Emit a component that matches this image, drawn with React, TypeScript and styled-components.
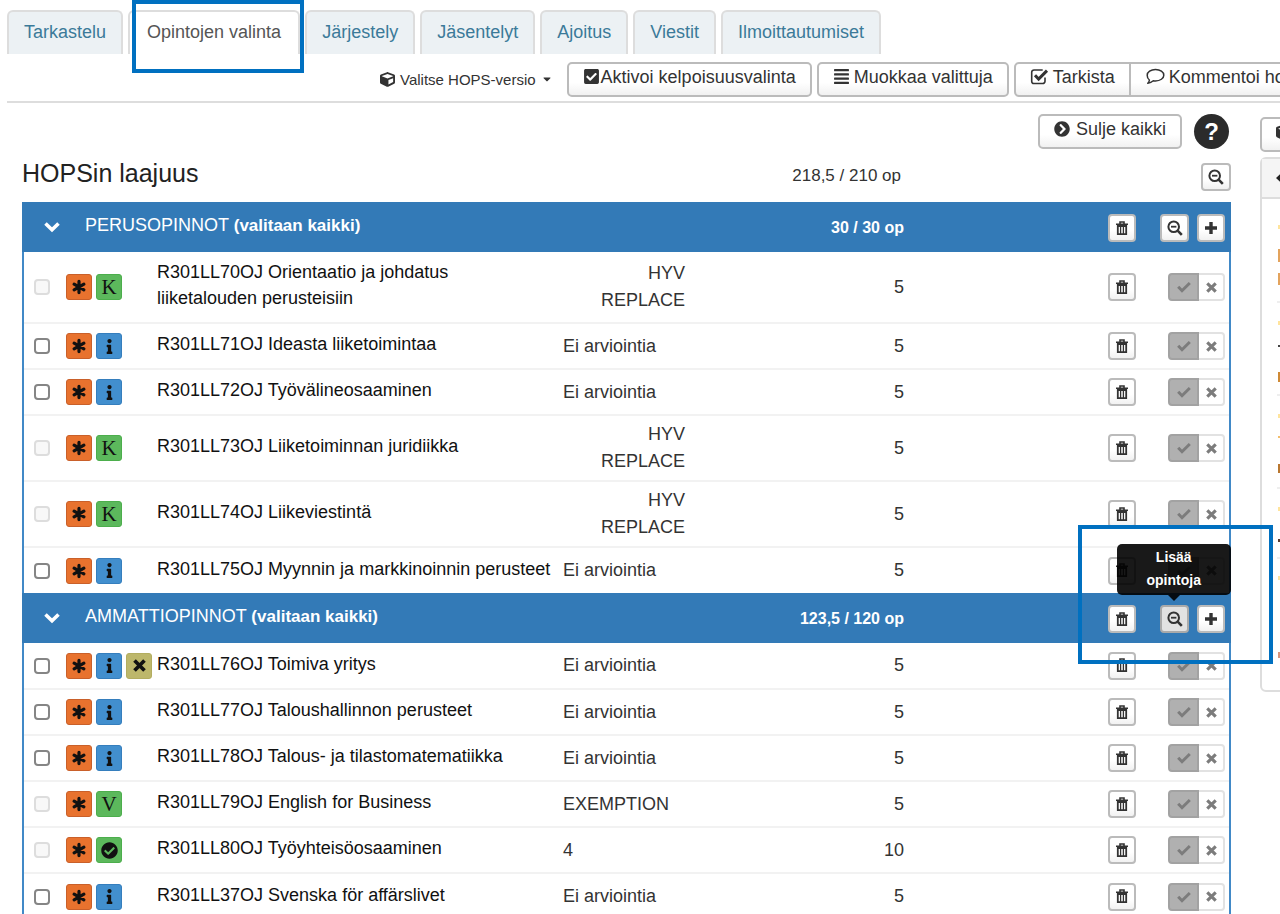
import React from "react";
import styled, { createGlobalStyle, css } from "styled-components";
import {
  FaAlignJustify,
  FaCaretDown,
  FaCheckCircle,
  FaCheckSquare,
  FaChevronCircleRight,
  FaCube,
  FaInfo,
} from "react-icons/fa";

const GlobalStyle = createGlobalStyle`
  * { box-sizing: border-box; }
  body {
    margin: 0;
    background: #fff;
    color: #333;
    font-family: "Liberation Sans", Arial, sans-serif;
    font-size: 18px;
  }
  button { font-family: inherit; cursor: pointer; }
`;

const BLUE = "#337ab7";
const MARKER = "#0070c0";

const Page = styled.div`
  height: 100vh;
  overflow: hidden;
  padding-top: 10px;
`;

const Tabs = styled.nav`
  display: flex;
  gap: 5px;
  padding-left: 7px;
`;

const Tab = styled.a<{ $active?: boolean }>`
  position: relative;
  height: 44px;
  padding: 0 ${(p) => (p.$active ? 17 : 15)}px;
  border: 2px solid #ddd;
  border-bottom: 0;
  border-radius: 6px 6px 0 0;
  background: ${(p) => (p.$active ? "#fff" : "#ecf1f4")};
  color: ${(p) => (p.$active ? "#555" : "#3b7a99")};
  line-height: 40px;
  white-space: nowrap;
  text-decoration: none;
`;

const TabMarker = styled.span`
  position: absolute;
  inset: -12px -6px -19px 2px;
  border: 4px solid ${MARKER};
  z-index: 2;
`;

const Toolbar = styled.div`
  display: flex;
  align-items: center;
  gap: 5px;
  height: 49px;
  margin-left: 7px;
  padding: 3px 0 0 373px;
  border-bottom: 2px solid #ddd;
  overflow: hidden;
`;

const VersionPicker = styled.button`
  display: flex;
  align-items: center;
  gap: 5px;
  margin-right: 9px;
  padding: 0;
  border: 0;
  background: none;
  color: #333;
  font-size: 15px;
  white-space: nowrap;
`;

const surface = css`
  border: 2px solid #bbb;
  background: linear-gradient(#fff 60%, #f1f1f1);
  color: #333;
`;

const ToolButton = styled.button<{ $gap?: number }>`
  ${surface}
  display: flex;
  flex: none;
  align-items: center;
  gap: ${(p) => p.$gap ?? 4}px;
  height: 35px;
  padding: 0 14px 5px;
  border-radius: 5px;
  font-size: 18px;
  line-height: 24px;
  white-space: nowrap;
`;

const ButtonGroup = styled.div`
  display: flex;
  flex: none;
  & > button:first-child { border-radius: 5px 0 0 5px; }
  & > button:last-child { border-radius: 0 5px 5px 0; margin-left: -2px; }
`;

const Columns = styled.div`
  display: grid;
  grid-template-columns: minmax(0, 1fr) 20px;
`;

const Main = styled.main`
  padding: 11px 29px 0 22px;
`;

const Controls = styled.div`
  display: flex;
  justify-content: flex-end;
  align-items: center;
  gap: 12px;
  padding-right: 2px;
`;

const Help = styled.button`
  width: 35px;
  height: 35px;
  padding: 0;
  border: 0;
  border-radius: 50%;
  background: #2b2b2b;
  color: #fff;
  font-size: 24px;
  font-weight: bold;
  line-height: 35px;
`;

const Summary = styled.div`
  display: grid;
  grid-template-columns: minmax(0, 1fr) auto 330px;
  align-items: center;
  height: 53px;
`;

const Heading = styled.h1`
  margin: 0;
  padding-bottom: 4px;
  color: #222;
  font-size: 25px;
  font-weight: normal;
`;

const Total = styled.span`
  font-size: 17px;
`;

const SummaryAction = styled.div`
  display: flex;
  justify-content: flex-end;
  padding-top: 3px;
`;

const IconButton = styled.button<{ $wide?: boolean; $pressed?: boolean }>`
  ${surface}
  position: relative;
  display: flex;
  align-items: center;
  justify-content: center;
  width: ${(p) => (p.$wide ? 30 : 28)}px;
  height: 28px;
  padding: 0;
  border-radius: 4px;
  ${(p) => p.$pressed && "background: #e2e2e2; border-color: #aaa;"}
`;

const PlanFrame = styled.div`
  border: solid #4189c7;
  border-width: 0 2px;
`;

const Plan = styled.table`
  width: 100%;
  border-collapse: collapse;
  table-layout: fixed;
  td, th { padding: 0; }
`;

const SectionRow = styled.tr`
  height: 50px;
  background: ${BLUE};
  box-shadow: -2px 0 ${BLUE}, 2px 0 ${BLUE};
  color: #fff;
  && > td { padding-top: 2px; }
`;

const SectionTitle = styled.div`
  display: flex;
  align-items: center;
  gap: 24px;
  padding: 0 0 4px 19px;
  font-size: 18px;
  font-weight: normal;
  text-align: left;
  svg { margin-top: 4px; }
`;

const Rule = styled.b`
  font-size: 17px;
`;

const CourseRow = styled.tr<{ $height: number }>`
  height: ${(p) => p.$height}px;
  & + & { border-top: 2px solid #f2f2f2; }
`;

const Flags = styled.div`
  display: flex;
  align-items: center;
  gap: 4px;
  padding-left: 10px;
`;

const Check = styled.input`
  appearance: none;
  width: 16px;
  height: 16px;
  margin: 0 12px 0 0;
  border: 2px solid #858585;
  border-radius: 4px;
  background: #fff;
  &:disabled { border-color: #ddd; background: #f8f8f8; }
`;

const badgeColors = {
  star: ["#e8722e", "#c9602a"],
  info: ["#428fce", "#357ebd"],
  good: ["#5cb85c", "#4cae4c"],
  cross: ["#bdb76b", "#b3ad60"],
};

const Badge = styled.span<{ $tone: keyof typeof badgeColors }>`
  display: flex;
  align-items: center;
  justify-content: center;
  width: 26px;
  height: 26px;
  border: 1px solid ${(p) => badgeColors[p.$tone][1]};
  border-radius: 3px;
  background: ${(p) => badgeColors[p.$tone][0]};
  color: #111;
  font-family: "Liberation Serif", serif;
  font-size: 21px;
  line-height: 26px;
`;

const Name = styled.div`
  padding-bottom: 4px;
  color: #111;
  line-height: 26px;
  white-space: pre-line;
`;

const Grade = styled.div<{ $stacked: boolean }>`
  width: 122px;
  text-align: ${(p) => (p.$stacked ? "right" : "left")};
  white-space: pre-line;
  line-height: 27px;
`;

const Credits = styled.div<{ $total?: boolean }>`
  text-align: right;
  font-size: ${(p) => (p.$total ? 16 : 18)}px;
  font-weight: ${(p) => (p.$total ? "bold" : "normal")};
`;

const Actions = styled.div`
  position: relative;
  display: grid;
  grid-template-columns: 28px 65px;
  gap: 24px;
  justify-content: end;
  padding-right: 4px;
`;

const ActionPair = styled.div<{ $gap: number }>`
  display: flex;
  justify-content: flex-end;
  gap: ${(p) => p.$gap}px;
`;

const Toggle = styled.button<{ $on?: boolean }>`
  display: flex;
  align-items: center;
  justify-content: center;
  width: ${(p) => (p.$on ? 31 : 26)}px;
  height: 28px;
  padding: 0;
  border: 2px solid ${(p) => (p.$on ? "#a2a2a2" : "#e2e2e2")};
  ${(p) => !p.$on && "border-left: 0;"}
  border-radius: ${(p) => (p.$on ? "4px 0 0 4px" : "0 4px 4px 0")};
  background: ${(p) => (p.$on ? "#b0b0b0" : "#fff")};
  color: #7c7c7c;
`;

const Tooltip = styled.span`
  position: absolute;
  bottom: 36px;
  left: 50%;
  width: 114px;
  margin-left: -58px;
  padding: 2px 24px 3px;
  border-radius: 5px;
  background: rgba(0, 0, 0, 0.9);
  color: #fff;
  font-size: 14px;
  font-weight: bold;
  line-height: 23px;
  text-align: center;
  z-index: 3;
  &::after {
    content: "";
    position: absolute;
    top: 100%;
    left: 50%;
    margin-left: -6px;
    border: 6px solid transparent;
    border-top-color: rgba(0, 0, 0, 0.9);
    border-bottom: 0;
  }
`;

const ActionMarker = styled.span`
  position: absolute;
  top: -80px;
  right: -44px;
  bottom: -31px;
  width: 195px;
  border: 4px solid ${MARKER};
  pointer-events: none;
  z-index: 4;
`;

const Side = styled.aside`
  overflow: hidden;
  padding-top: 14px;
`;

const SideButton = styled(ToolButton)`
  width: 120px;
`;

const SidePanel = styled.section`
  width: 320px;
  margin-top: 5px;
  border: 2px solid #ddd;
  border-radius: 6px;
`;

const SideHead = styled.header`
  display: flex;
  align-items: center;
  height: 40px;
  padding-left: 14px;
  border-bottom: 2px solid #ddd;
  background: #f5f5f5;
`;

const SideItem = styled.div<{ $height: number }>`
  display: flow-root;
  height: ${(p) => p.$height}px;
  margin-left: 15px;
  padding-left: 1px;
  & + & { border-top: 2px solid #eee; }
`;

const Mark = styled.span<{ $space: number; $height: number; $color: string }>`
  display: block;
  width: 12px;
  height: ${(p) => p.$height}px;
  margin-top: ${(p) => p.$space}px;
  background: ${(p) => p.$color};
`;

const Col = styled.col<{ $width?: number }>`
  width: ${(p) => (p.$width ? `${p.$width}px` : "auto")};
`;

const AsteriskIcon = () => (
  <svg width="16" height="16" viewBox="0 0 16 16" stroke="#111" strokeWidth="3.2" strokeLinecap="round" aria-hidden="true">
    <path d="M8 2.400v11.200M3.100 5.200l9.800 5.600M12.900 5.200l-9.800 5.600" />
  </svg>
);

const CheckBoxIcon = () => (
  <svg width="19" height="17" viewBox="0 0 19 17" fill="none" stroke="#333" aria-hidden="true">
    <path d="M15 9.500v3.700a2.300 2.300 0 0 1-2.300 2.300H4a2.300 2.300 0 0 1-2.300-2.300V4.300A2.300 2.300 0 0 1 4 2h8.700" strokeWidth="1.600" />
    <path d="M5 7.300l3.600 3.700 8.400-8.400" strokeWidth="3" />
  </svg>
);

const CommentIcon = () => (
  <svg width="20" height="17" viewBox="0 0 20 17" fill="none" stroke="#333" strokeWidth="1.500" strokeLinejoin="round" aria-hidden="true">
    <path d="M10.500 1.500c4.700 0 8.300 2.500 8.300 5.700s-3.600 5.700-8.300 5.700c-.8 0-1.500-.1-2.200-.2-1.500 1.400-3.400 2.300-5.500 2.600.9-.9 1.500-2 1.600-3.300C2.900 11 2.200 9.200 2.200 7.200c0-3.200 3.600-5.700 8.300-5.700z" />
  </svg>
);

const ArrowLeftIcon = () => (
  <svg width="12" height="12" viewBox="0 0 12 12" aria-hidden="true">
    <path d="M0 6l6-5.500v3.800h6v3.400H6v3.800z" fill="#222" />
  </svg>
);

const TrashIcon = () => (
  <svg width="12" height="15" viewBox="0 0 12 15" fill="none" stroke="#333" aria-hidden="true">
    <path d="M4 2.500V1h4v1.500M0 3.200h12" strokeWidth="1.600" />
    <path d="M1.800 5v8.200h8.400V5z" strokeWidth="1.800" />
    <path d="M4.600 5v8M7.400 5v8" strokeWidth="1.300" />
  </svg>
);

const ZoomIcon = () => (
  <svg width="16" height="16" viewBox="0 0 16 16" fill="none" stroke="#333" aria-hidden="true">
    <circle cx="6.700" cy="6.700" r="5.300" strokeWidth="2" />
    <path d="M4 6.700h5.400" strokeWidth="1.800" />
    <path d="M10.600 10.600l4.200 4.200" strokeWidth="2.600" />
  </svg>
);

const PlusIcon = () => (
  <svg width="14" height="14" viewBox="0 0 14 14" stroke="#333" strokeWidth="3.400" aria-hidden="true">
    <path d="M7 1v12M1 7h12" />
  </svg>
);

const TickIcon = () => (
  <svg width="14" height="12" viewBox="0 0 14 12" fill="none" stroke="currentColor" strokeWidth="3" aria-hidden="true">
    <path d="M1.200 5.800l3.800 3.900L12.800 2" />
  </svg>
);

const CrossIcon = ({ size = 11 }: { size?: number }) => (
  <svg width={size} height={size} viewBox="0 0 12 12" stroke="currentColor" strokeWidth="3.400" aria-hidden="true">
    <path d="M1.400 1.400l9.200 9.200M10.600 1.400L1.400 10.600" />
  </svg>
);

const ChevronIcon = () => (
  <svg width="18" height="12" viewBox="0 0 18 12" fill="none" stroke="#fff" strokeWidth="3.600" aria-hidden="true">
    <path d="M2.500 2.500L9 8.800l6.500-6.300" />
  </svg>
);

type Status = "info" | "K" | "V" | "done";

interface Course {
  code: string;
  name: string;
  status: Status;
  grade: string;
  credits: number;
  height?: number;
  crossed?: boolean;
}

interface Section {
  title: string;
  credits: string;
  hint?: boolean;
  courses: Course[];
}

const NONE = "Ei arviointia";
const REPLACED = "HYV\nREPLACE";

const sections: Section[] = [
  {
    title: "PERUSOPINNOT",
    credits: "30 / 30 op",
    courses: [
      { code: "R301LL70OJ", name: "Orientaatio ja johdatus\nliiketalouden perusteisiin", status: "K", grade: REPLACED, credits: 5, height: 71 },
      { code: "R301LL71OJ", name: "Ideasta liiketoimintaa", status: "info", grade: NONE, credits: 5 },
      { code: "R301LL72OJ", name: "Työvälineosaaminen", status: "info", grade: NONE, credits: 5 },
      { code: "R301LL73OJ", name: "Liiketoiminnan juridiikka", status: "K", grade: REPLACED, credits: 5, height: 66 },
      { code: "R301LL74OJ", name: "Liikeviestintä", status: "K", grade: REPLACED, credits: 5, height: 66 },
      { code: "R301LL75OJ", name: "Myynnin ja markkinoinnin perusteet", status: "info", grade: NONE, credits: 5 },
    ],
  },
  {
    title: "AMMATTIOPINNOT",
    credits: "123,5 / 120 op",
    hint: true,
    courses: [
      { code: "R301LL76OJ", name: "Toimiva yritys", status: "info", grade: NONE, credits: 5, crossed: true },
      { code: "R301LL77OJ", name: "Taloushallinnon perusteet", status: "info", grade: NONE, credits: 5 },
      { code: "R301LL78OJ", name: "Talous- ja tilastomatematiikka", status: "info", grade: NONE, credits: 5 },
      { code: "R301LL79OJ", name: "English for Business", status: "V", grade: "EXEMPTION", credits: 5 },
      { code: "R301LL80OJ", name: "Työyhteisöosaaminen", status: "done", grade: "4", credits: 10 },
      { code: "R301LL37OJ", name: "Svenska för affärslivet", status: "info", grade: NONE, credits: 5 },
    ],
  },
];

const tabs = ["Tarkastelu", "Opintojen valinta", "Järjestely", "Jäsentelyt", "Ajoitus", "Viestit", "Ilmoittautumiset"];

// Each entry: item height, then [space above, height, colour] of its marks.
const sideItems: { height: number; marks: [number, number, string][] }[] = [
  { height: 102, marks: [[26, 4, "#ffe49c"], [20, 13, "#e3a35c"], [11, 12, "#e3a35c"]] },
  { height: 93, marks: [[18, 4, "#ffe49c"], [20, 2, "#444"], [25, 10, "#cf8a35"]] },
  { height: 93, marks: [[18, 4, "#ffe49c"], [18, 2, "#f3bd6b"], [26, 9, "#b9772f"]] },
  { height: 70, marks: [[18, 4, "#ffe49c"], [28, 3, "#5a3a2e"]] },
  { height: 133, marks: [[17, 4, "#ffe49c"], [72, 6, "#d9957c"]] },
];

const StatusBadge = ({ status }: { status: Status }) => (
  <Badge $tone={status === "info" ? "info" : "good"}>
    {status === "info" ? <FaInfo size={15} /> : status === "done" ? <FaCheckCircle size={17} /> : status}
  </Badge>
);

const CourseLine = ({ course }: { course: Course }) => (
  <CourseRow $height={course.height ?? 46}>
    <td>
      <Flags>
        <Check type="checkbox" aria-label={course.name} disabled={course.status !== "info"} />
        <Badge $tone="star"><AsteriskIcon /></Badge>
        <StatusBadge status={course.status} />
        {course.crossed && <Badge $tone="cross"><CrossIcon size={13} /></Badge>}
      </Flags>
    </td>
    <td><Name>{course.code} {course.name}</Name></td>
    <td><Grade $stacked={course.grade === REPLACED}>{course.grade}</Grade></td>
    <td><Credits>{course.credits}</Credits></td>
    <td>
      <Actions>
        <IconButton aria-label="Poista"><TrashIcon /></IconButton>
        <ActionPair $gap={0}>
          <Toggle $on aria-label="Valitse"><TickIcon /></Toggle>
          <Toggle aria-label="Hylkää"><CrossIcon /></Toggle>
        </ActionPair>
      </Actions>
    </td>
  </CourseRow>
);

const SectionBody = ({ section }: { section: Section }) => (
  <tbody>
    <SectionRow>
      <th colSpan={3} scope="colgroup">
        <SectionTitle>
          <ChevronIcon />
          <span>{section.title} <Rule>(valitaan kaikki)</Rule></span>
        </SectionTitle>
      </th>
      <td><Credits $total>{section.credits}</Credits></td>
      <td>
        <Actions>
          <IconButton aria-label="Poista"><TrashIcon /></IconButton>
          <ActionPair $gap={8}>
            <IconButton $wide $pressed={section.hint} aria-label="Lisää opintoja">
              <ZoomIcon />
              {section.hint && <Tooltip role="tooltip">Lisää opintoja</Tooltip>}
            </IconButton>
            <IconButton aria-label="Lisää"><PlusIcon /></IconButton>
          </ActionPair>
          {section.hint && <ActionMarker />}
        </Actions>
      </td>
    </SectionRow>
    {section.courses.map((course) => <CourseLine key={course.code} course={course} />)}
  </tbody>
);

export default function App() {
  return (
    <Page>
      <GlobalStyle />
      <Tabs>
        {tabs.map((tab, i) => (
          <Tab key={tab} href="#" $active={i === 1}>
            {tab}
            {i === 1 && <TabMarker />}
          </Tab>
        ))}
      </Tabs>
      <Toolbar>
        <VersionPicker>
          <FaCube size={15} />
          Valitse HOPS-versio
          <FaCaretDown size={12} />
        </VersionPicker>
        <ToolButton $gap={1}><FaCheckSquare size={17} />Aktivoi kelpoisuusvalinta</ToolButton>
        <ToolButton><FaAlignJustify size={17} />Muokkaa valittuja</ToolButton>
        <ButtonGroup>
          <ToolButton><CheckBoxIcon />Tarkista</ToolButton>
          <ToolButton><CommentIcon />Kommentoi hopsia</ToolButton>
        </ButtonGroup>
      </Toolbar>
      <Columns>
        <Main>
          <Controls>
            <ToolButton $gap={6}><FaChevronCircleRight size={16} />Sulje kaikki</ToolButton>
            <Help aria-label="Ohje">?</Help>
          </Controls>
          <Summary>
            <Heading>HOPSin laajuus</Heading>
            <Total>218,5 / 210 op</Total>
            <SummaryAction>
              <IconButton $wide aria-label="Hae opintoja"><ZoomIcon /></IconButton>
            </SummaryAction>
          </Summary>
          <PlanFrame>
            <Plan>
              <colgroup>
                <Col $width={133} />
                <Col />
                <Col $width={140} />
                <Col $width={201} />
                <Col $width={325} />
              </colgroup>
              {sections.map((section) => <SectionBody key={section.title} section={section} />)}
            </Plan>
          </PlanFrame>
        </Main>
        <Side>
          <SideButton aria-label="Paketit"><FaCube size={17} /></SideButton>
          <SidePanel>
            <SideHead><ArrowLeftIcon /></SideHead>
            {sideItems.map((item, i) => (
              <SideItem key={i} $height={item.height}>
                {item.marks.map(([space, height, color], j) => (
                  <Mark key={j} $space={space} $height={height} $color={color} />
                ))}
              </SideItem>
            ))}
          </SidePanel>
        </Side>
      </Columns>
    </Page>
  );
}
